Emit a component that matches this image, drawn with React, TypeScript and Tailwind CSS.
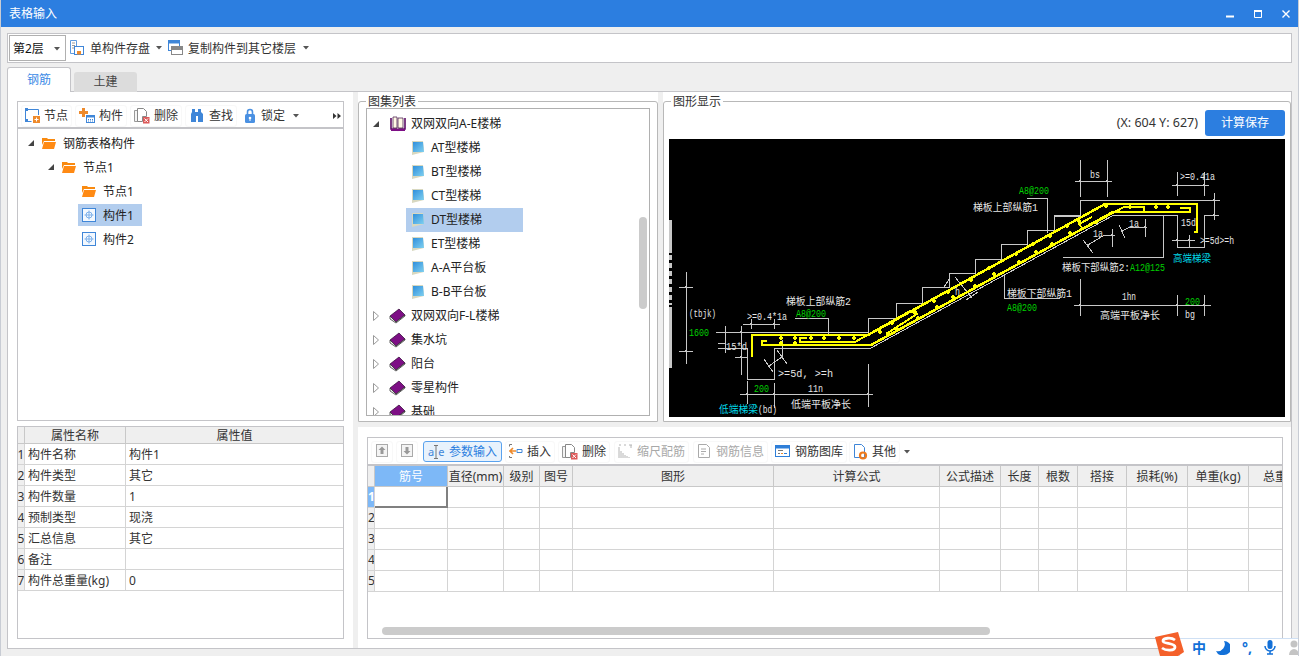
import type { ReactNode } from 'react';

const Caret = ({ className = '' }: { className?: string }) => (
  <svg width="6" height="4" viewBox="0 0 6 4" className={className}>
    <path d="M0 0h6L3 3.500z" fill="#555" />
  </svg>
);

const Folder = () => (
  <svg width="14" height="13" viewBox="0 0 14 13" className="shrink-0">
    <path d="M0 1h5l1 1h7v2H2L0 8z" fill="#f98a10" />
    <path d="M2 5h12l-2 7H0z" fill="#ff8a14" />
  </svg>
);

const ExpandedArrow = () => (
  <svg width="6" height="6" viewBox="0 0 6 6" className="shrink-0">
    <path d="M0 6h6V0z" fill="#444" />
  </svg>
);

const CollapsedArrow = () => (
  <svg width="6" height="10" viewBox="0 0 6 10" className="shrink-0">
    <path d="M.5.5l5 4.5-5 4.5z" fill="#fff" stroke="#999" />
  </svg>
);

const PartIcon = () => (
  <svg width="14" height="14" viewBox="0 0 14 14" className="shrink-0">
    <rect x=".5" y=".5" width="13" height="13" fill="#f3f8fe" stroke="#3f86d8" />
    <circle cx="7" cy="7" r="3" fill="none" stroke="#7db0ea" />
    <path d="M7 2.500v9M2.500 7h9" stroke="#7db0ea" />
  </svg>
);

const BookClosed = () => (
  <svg width="17" height="16" viewBox="0 0 17 16" className="shrink-0">
    <path d="M1 8l9-7 6 6-9 7z" fill="#7d0f85" stroke="#2c0530" strokeWidth=".7" />
    <path d="M1 8v3l6 4 9-7V7l-9 7z" fill="#eee" stroke="#222" strokeWidth=".7" />
  </svg>
);

const BookOpen = () => (
  <svg width="17" height="16" viewBox="0 0 17 16" className="shrink-0">
    <path d="M2 2v11h6l1 1 1-1h6V2" fill="none" stroke="#5d0c66" strokeWidth="1.600" />
    <path d="M4 1h4v11H4zM9 2h5v10H9z" fill="#fffbe6" stroke="#3b0840" strokeWidth=".7" />
    <path d="M2 13h14v2H2z" fill="#7d0f85" />
  </svg>
);

const Notebook = () => (
  <svg width="14" height="16" viewBox="0 0 14 16" className="shrink-0">
    <defs>
      <linearGradient id="nb" x1="0" y1="0" x2="1" y2="1">
        <stop offset="0" stopColor="#2f8fdc" />
        <stop offset="1" stopColor="#7fd0f0" />
      </linearGradient>
    </defs>
    <path d="M1 1h11l1 11-12 3z" fill="#d8d8c0" />
    <path d="M2 2h10l1 10H2z" fill="url(#nb)" />
  </svg>
);

const glyphs: Record<string, ReactNode> = {
  node: (
    <>
      <path d="M.5 10V1.500h13V7M.5 10v3.500h6" fill="none" stroke="#3f86d8" />
      <rect x="0" y="0" width="3" height="3" fill="#3f86d8" />
      <rect x="0" y="11" width="3" height="3" fill="#3f86d8" />
      <rect x="8" y="8" width="7" height="7" fill="#ee8a2c" />
      <path d="M11.500 9.500v4M9.500 11.500h4" stroke="#fff" />
    </>
  ),
  part: (
    <>
      <path d="M3 0h3v3h3v3H6v3H3V6H0V3h3z" fill="#ee8a2c" />
      <rect x="7.500" y="7.500" width="8" height="7" fill="#fff" stroke="#3f86d8" />
      <path d="M7.500 8.500h8" stroke="#3f86d8" strokeWidth="2" />
      <path d="M9 11.500h1M11 11.500h1M13 11.500h1M9 13h1M11 13h1M13 13h1" stroke="#3f86d8" />
    </>
  ),
  del: (
    <>
      <path d="M.5 2.500h6v11h-6z" fill="#f4f4f4" stroke="#999" />
      <path d="M3.500 .5h6l3 3v5h-4v5h-5z" fill="#fff" stroke="#888" />
      <rect x="9" y="9" width="6.500" height="6.500" fill="#dc5a5a" />
      <path d="M10.500 10.500l3.500 3.500M14 10.500L10.500 14" stroke="#fff" />
    </>
  ),
  find: (
    <path d="M3 1h3v3h3V1h3v3l2 2v8h-5V8H7v6H2V6l1-2z" fill="#3f86d8" />
  ),
  lock: (
    <>
      <path d="M3.500 6V4a2.500 2.500 0 015 0v2" fill="none" stroke="#4a90e2" strokeWidth="1.600" />
      <rect x="1" y="6" width="10" height="9" rx="1.500" fill="#4a90e2" />
      <circle cx="6" cy="10" r="1.300" fill="#fff" />
      <path d="M6 10v3" stroke="#fff" />
    </>
  ),
  save: (
    <>
      <path d="M.5 .5h6v13h-6z" fill="#fff" stroke="#5f9bdf" />
      <path d="M2 3h3M2 5.500h3M2 8h3" stroke="#999" />
      <rect x="4.500" y="6.500" width="9" height="8" fill="#fff" stroke="#3f86d8" />
      <rect x="7" y="11" width="4" height="3.500" fill="#ee8a2c" />
    </>
  ),
  copy: (
    <>
      <rect x=".5" y=".5" width="11" height="10" fill="#fff" stroke="#3f86d8" />
      <path d="M.5 2h11" stroke="#3f86d8" strokeWidth="3" />
      <rect x="3.500" y="6.500" width="11" height="8" fill="#fff" stroke="#888" />
      <path d="M3.500 8.500h11" stroke="#888" strokeWidth="3" />
    </>
  ),
  insert: (
    <>
      <path d="M3 .5H.5v2M.5 12v1.500H3" fill="none" stroke="#777" />
      <path d="M7 7H1.500M4 4L1 7l3 3" fill="none" stroke="#ee8a2c" strokeWidth="1.600" />
      <path d="M8 5.500h5v3H8z" fill="none" stroke="#3f86d8" />
    </>
  ),
  scale: (
    <path d="M1 3v11M3 7v7M5 9v5M7 11v3M9 12v2M11 13v1M1 1h2M6 1h2M11 1h3M13 1v3" stroke="#b4b4b4" fill="none" />
  ),
  info: (
    <>
      <path d="M1.500 .5h8l3 3v10h-11z" fill="#fff" stroke="#aaa" />
      <path d="M4 5h5M4 7.500h5M4 10h3" stroke="#aaa" />
    </>
  ),
  lib: (
    <>
      <rect x=".5" y="1.500" width="14" height="11" fill="#fff" stroke="#2f7fd8" />
      <path d="M.5 3h14" stroke="#2f7fd8" strokeWidth="3" />
      <path d="M3 6.500h5M3 9.500h2" stroke="#777" />
      <path d="M6 9.500h2" stroke="#ee8a2c" />
      <path d="M9 9.500h3" stroke="#2f7fd8" />
    </>
  ),
  other: (
    <>
      <path d="M1.500 .5h7l3 3v10h-10z" fill="#fff" stroke="#3f86d8" />
      <circle cx="10" cy="11.500" r="3" fill="none" stroke="#ee7a1c" strokeWidth="2.200" />
    </>
  ),
  up: (
    <>
      <rect x=".5" y=".5" width="11" height="12" fill="#f4f4f4" stroke="#aaa" />
      <path d="M6 2.500L2.500 6h2v4h3V6h2z" fill="#999" />
    </>
  ),
  down: (
    <>
      <rect x=".5" y=".5" width="11" height="12" fill="#f4f4f4" stroke="#aaa" />
      <path d="M6 10.500L2.500 7h2V3h3v4h2z" fill="#999" />
    </>
  ),
};

const Glyph = ({ name, w = 15 }: { name: string; w?: number }) => (
  <svg width={w} height="16" viewBox={`0 0 ${w} 16`} className="shrink-0">
    {glyphs[name]}
  </svg>
);

const Chip = ({ icon, label, w = 15, gray, className = '' }: { icon: string; label: string; w?: number; gray?: boolean; className?: string }) => (
  <div className={`flex h-[22px] items-center gap-[4px] rounded-[3px] border border-[#f8f8f8] px-[3px] ${gray ? 'text-[#a8a8a8]' : 'text-[#333]'} ${className}`}>
    <Glyph name={icon} w={w} />
    <span className="whitespace-nowrap">{label}</span>
  </div>
);

const TreeRow = ({ indent, arrow, icon, label, selected, part }: { indent: string; arrow?: ReactNode; icon: ReactNode; label: string; selected?: boolean; part?: boolean }) => (
  <div className={`flex h-[24px] items-center text-[#222] ${indent}`}>
    <div className="flex w-[14px] shrink-0 items-center">{arrow}</div>
    <div className={`flex h-[22px] items-center gap-[7px] pr-[8px] ${part ? 'pl-[4px]' : ''} ${selected ? 'bg-[#b2cdee]' : ''}`}>
      {icon}
      <span className="whitespace-nowrap pt-px">{label}</span>
    </div>
  </div>
);

const ListRow = ({ arrow, icon, label, selected, child }: { arrow?: ReactNode; icon: ReactNode; label: string; selected?: boolean; child?: boolean }) => (
  <div className={`flex h-[24px] items-center text-[#222] ${child ? 'pl-[39px]' : 'pl-[6px]'}`}>
    {!child && <div className="flex w-[16px] shrink-0 items-center">{arrow}</div>}
    <div className={`flex h-[24px] items-center ${child ? 'gap-[6px] pl-[5px]' : 'gap-[5px]'} ${selected ? 'w-[117px] bg-[#b2cdee]' : ''}`}>
      {icon}
      <span className="whitespace-nowrap">{label}</span>
    </div>
  </div>
);

const props = [
  ['构件名称', '构件1'],
  ['构件类型', '其它'],
  ['构件数量', '1'],
  ['预制类型', '现浇'],
  ['汇总信息', '其它'],
  ['备注', ''],
  ['构件总重量(kg)', '0'],
];

const gridCols = ['筋号', '直径(mm)', '级别', '图号', '图形', '计算公式', '公式描述', '长度', '根数', '搭接', '损耗(%)', '单重(kg)', '总重(kg)'];

const Line = ({ p, c = '#c8c8c8', w = 1 }: { p: string; c?: string; w?: number }) => (
  <polyline points={p} fill="none" stroke={c} strokeWidth={w} />
);

const Cad = ({ x, y, w, s, c = '#e6e6e6' }: { x: number; y: number; w: number; s: string; c?: string }) => (
  <text
    x={x}
    y={y + 4}
    textLength={w}
    lengthAdjust="spacingAndGlyphs"
    fontSize="10"
    fontFamily="'Liberation Mono','Noto Sans CJK SC',monospace"
    fill={c}
    shapeRendering="auto"
  >
    {s}
  </text>
);

const upperDots = [[892, 323], [915, 312], [934, 301], [948, 292], [971, 280], [989, 268], [1016, 254], [1033, 244], [1050, 236], [1067, 226], [1079, 221], [781, 338], [795, 338], [811, 338], [824, 338], [839, 338], [854, 338], [1106, 206], [1130, 207], [1156, 207], [1168, 207]];
const lowerDots = [[897, 330], [918, 318], [937, 307], [953, 297], [975, 286], [994, 274], [1019, 262], [1036, 252], [1052, 244], [1070, 233], [781, 343], [795, 343], [880, 332], [1096, 222]];
const ticks = [[686, 287], [686, 351], [741, 332], [741, 357], [751, 324], [774, 324], [747, 394], [774, 394], [868, 394], [1080, 181], [1107, 181], [1177, 185], [1204, 185], [1177, 240], [1189, 240], [1080, 305], [1177, 305], [1204, 305], [1214, 200], [1214, 215], [769, 366], [782, 357], [1088, 245], [1122, 231], [1112, 235], [1145, 227]];

const Drawing = () => (
  <svg viewBox="669 139 616 278" width="616" height="278" className="block bg-black" shapeRendering="crispEdges">
    {/* stair outline */}
    <Line p="716,332 868,332 868,318 896,318 896,303 922,303 922,287 949,287 949,273 975,273 975,259 1001,259 1001,244 1027,244 1027,230 1054,230 1054,216 1080,216 1080,200.500 1220,200.500" />
    <Line p="718,348 747,348 747,379 774,379 774,348 871,348 1113,215.500 1177,215.500 1177,247 1204,247 1204,215.500 1219,215.500" />
    <Line p="1054,215.500 1080,215.500" />
    <Line p="1163,215.500 1163,257.500 1063,257.500" />
    <Line p="795,318 828,318 828,334" />
    <Line p="1027,198 1047,198 1047,233" />
    <Line p="1004,275 1004,298 1060,298" />
    {/* dimension lines */}
    <Line p="686,272 686,364" />
    <Line p="679,287 693,287" />
    <Line p="679,351 693,351" />
    <Line p="743,324 780,324" />
    <Line p="751,319 751,329" />
    <Line p="774,319 774,329" />
    <Line p="725,326 725,353" />
    <Line p="741,326 741,375" />
    <Line p="735,332 747,332" />
    <Line p="718,343 725,343" />
    <Line p="735,357 747,357" />
    <Line p="740,394 873,394" />
    <Line p="747,381 747,404" />
    <Line p="774,383 774,408" />
    <Line p="868,364 868,407" />
    <Line p="764,359 773,372" />
    <Line p="777,350 787,364" />
    <Line p="769,366 782,357" />
    <Line p="782,357 782,340" />
    <Line p="955,277 972,298" />
    <Line p="944,287 950,278" />
    <Line p="966,300 978,292" />
    <Line p="1080,160 1080,197" />
    <Line p="1107,160 1107,197" />
    <Line p="1075,181 1112,181" />
    <Line p="1177,172 1177,196" />
    <Line p="1204,172 1204,196" />
    <Line p="1172,185 1209,185" />
    <Line p="1214,193 1214,220" />
    <Line p="1172,240 1195,240" />
    <Line p="1189,235 1189,247" />
    <Line p="1088,245 1103,236 1115,235" />
    <Line p="1112,229 1112,247" />
    <Line p="1083,240 1093,253" />
    <Line p="1122,231 1130,227 1147,227" />
    <Line p="1145,219 1145,237" />
    <Line p="1119,225 1125,238" />
    <Line p="1074,305 1211,305" />
    <Line p="1080,279 1080,316" />
    <Line p="1177,295 1177,316" />
    <Line p="1204,295 1204,316" />
    {ticks.map(([x, y]) => (
      <rect key={`${x}-${y}`} x={x - 1} y={y - 1} width="2" height="2" fill="#c8c8c8" />
    ))}
    {/* left edge marks */}
    <path d="M670.500 220v33M670.500 307v61" stroke="#c8c8c8" strokeWidth="3" fill="none" />
    <path d="M670.500 255v50" stroke="#c8c8c8" strokeWidth="3" strokeDasharray="5 3" fill="none" />
    {/* rebar */}
    <Line c="#ffff00" w={2.5} p="753,356 752,356 752,335 868,335 1105,204 1197,204 1197,232 1194,232" />
    <Line c="#ffff00" w={2.5} p="767,341 762,341 762,345 871,345 1113,212 1190,212 1190,208 1180,208" />
    <Line c="#ffff00" w={2} p="807,338 800,338 800,342 855,342 910,311 917,314 886,334" />
    <Line c="#ffff00" w={2} p="1144,212 1144,207 1124,207 1083,229 1079,224 1092,217" />
    {upperDots.concat(lowerDots).map(([x, y]) => (
      <path key={`d${x}-${y}`} d={`M${x - 2} ${y}h4M${x} ${y - 2}v4`} stroke="#ffff00" strokeWidth="1.500" />
    ))}
    {/* labels */}
    <Cad x={689} y={313} w={27} s="(tbjk)" />
    <Cad x={689} y={332} w={20} s="1600" c="#00d000" />
    <Cad x={747} y={316} w={40} s=">=0.4*1a" />
    <Cad x={786} y={301} w={65} s="梯板上部纵筋2" />
    <Cad x={796} y={313} w={30} s="A8@200" c="#00d000" />
    <Cad x={726} y={346} w={21} s="15*d" />
    <Cad x={778} y={373} w={55} s=">=5d, >=h" />
    <Cad x={754} y={388} w={15} s="200" c="#00d000" />
    <Cad x={808} y={388} w={15} s="11n" />
    <Cad x={719} y={409} w={39} s="低端梯梁" c="#00d8e8" />
    <Cad x={758} y={409} w={19} s="(bd)" />
    <Cad x={791} y={404} w={60} s="低端平板净长" />
    <Cad x={955} y={291} w={5} s="h" />
    <Cad x={1019} y={190} w={30} s="A8@200" c="#00d000" />
    <Cad x={973} y={207} w={65} s="梯板上部纵筋1" />
    <Cad x={1007} y={293} w={65} s="梯板下部纵筋1" />
    <Cad x={1007} y={307} w={30} s="A8@200" c="#00d000" />
    <Cad x={1090} y={174} w={10} s="bs" />
    <Cad x={1180} y={176} w={35} s=">=0.41a" />
    <Cad x={1181} y={222} w={15} s="15d" />
    <Cad x={1200} y={240} w={34} s=">=5d>=h" />
    <Cad x={1173} y={258} w={38} s="高端梯梁" c="#00d8e8" />
    <Cad x={1062} y={267} w={68} s="梯板下部纵筋2:" />
    <Cad x={1130} y={267} w={35} s="A12@125" c="#00d000" />
    <Cad x={1093} y={233} w={10} s="1a" />
    <Cad x={1129} y={223} w={10} s="1a" />
    <Cad x={1122} y={296} w={14} s="1hn" />
    <Cad x={1185} y={301} w={15} s="200" c="#00d000" />
    <Cad x={1185} y={314} w={10} s="bg" />
    <Cad x={1100} y={315} w={60} s="高端平板净长" />
  </svg>
);

const Legend = ({ text }: { text: string }) => (
  <span className="absolute left-[7px] top-[-7px] bg-white px-[2px] text-[12px] leading-[14px] text-[#333]">{text}</span>
);

export default function App() {
  return (
    <div
      className="relative flex h-[656px] w-[1299px] flex-col overflow-hidden border-x border-[#c8ccd4] bg-[#efefef] text-[12px] leading-[16px]"
      style={{ fontFamily: "'Noto Sans','Noto Sans CJK SC',sans-serif" }}
    >
      {/* title bar */}
      <div className="-mx-px flex h-[27px] shrink-0 items-center justify-between bg-[#2c7ee0] pl-[9px] pr-[9px] pt-px text-white">
        <span>表格输入</span>
        <div className="flex items-center gap-[20px]">
          <svg width="8" height="8" viewBox="0 0 8 8"><path d="M0 5.500h8v2H0z" fill="#fff" /></svg>
          <svg width="8" height="8" viewBox="0 0 8 8"><path d="M.5 1.500h7v6h-7z" fill="none" stroke="#fff" /><path d="M0 0h8v2H0z" fill="#fff" /></svg>
          <svg width="8" height="8" viewBox="0 0 8 8"><path d="M.5.500l7 7M7.500.500l-7 7" stroke="#fff" strokeWidth="1.400" /></svg>
        </div>
      </div>

      {/* top toolbar */}
      <div className="ml-[6px] mr-[6px] mt-[6px] flex h-[30px] shrink-0 items-center border border-[#c4c4c8] bg-white pl-px text-[#333]">
        <div className="flex h-[26px] w-[57px] items-center justify-between border border-[#b0b0b0] pl-[3px] pr-[5px] pt-px text-[#111]">
          <span>第2层</span>
          <Caret />
        </div>
        <div className="ml-[4px]"><Glyph name="save" /></div>
        <span className="ml-[5px] pt-px">单构件存盘</span>
        <Caret className="ml-[6px]" />
        <div className="ml-[6px]"><Glyph name="copy" /></div>
        <span className="ml-[5px] pt-px">复制构件到其它楼层</span>
        <Caret className="ml-[7px]" />
      </div>

      {/* tabs */}
      <div className="relative z-10 ml-[6px] mt-[4px] flex h-[25px] shrink-0 items-end gap-[3px]">
        <div className="flex h-[25px] w-[64px] items-center justify-center rounded-t-[3px] border border-b-0 border-[#c4c4c8] bg-white text-[#3b8ae6]">钢筋</div>
        <div className="flex h-[20px] w-[63px] items-center justify-center rounded-t-[3px] bg-[#dcdcdc] text-[#444]">土建</div>
      </div>

      {/* main frame */}
      <div className="-mt-px ml-[6px] mr-[6px] flex h-[558px] shrink-0 border border-[#c4c4c8] bg-[#efefef]">
        {/* left pane */}
        <div className="flex w-[345px] shrink-0 flex-col bg-white px-[9px] pb-[9px] pt-[9px]">
          <div className="flex h-[320px] shrink-0 flex-col border border-[#c4c4c8]">
            <div className="flex h-[27px] shrink-0 items-center gap-[3px] border-b-2 border-[#c4c4c8] pl-[3px] pt-[3px]">
              <Chip icon="node" label="节点" />
              <Chip icon="part" label="构件" w={16} />
              <Chip icon="del" label="删除" w={16} />
              <Chip icon="find" label="查找" w={16} />
              <div className="ml-px flex h-[22px] items-center gap-[5px] px-[3px] text-[#333]">
                <Glyph name="lock" w={12} />
                <span>锁定</span>
                <Caret className="ml-[3px]" />
              </div>
              <svg width="8" height="6" viewBox="0 0 8 6" className="ml-auto mr-[2px]"><path d="M0 0l3.500 3L0 6zM4.500 0L8 3 4.500 6z" fill="#333" /></svg>
            </div>
            <div className="flex-1 pt-[2px]">
              <TreeRow indent="pl-[10px]" arrow={<ExpandedArrow />} icon={<Folder />} label="钢筋表格构件" />
              <TreeRow indent="pl-[30px]" arrow={<ExpandedArrow />} icon={<Folder />} label="节点1" />
              <TreeRow indent="pl-[50px]" icon={<Folder />} label="节点1" />
              <TreeRow indent="pl-[46px]" icon={<PartIcon />} label="构件1" selected part />
              <TreeRow indent="pl-[46px]" icon={<PartIcon />} label="构件2" part />
            </div>
          </div>
          <div className="mt-[5px] flex h-[213px] shrink-0 flex-col border border-[#c4c4c8]">
            <div className="grid grid-cols-[7px_101px_1fr] text-[#333]">
              <div className="h-[17px] border-b border-r border-[#c8c8c8] bg-[#efefef]" />
              <div className="flex h-[17px] items-center justify-center border-b border-r border-[#c8c8c8] bg-[#efefef] pt-[2px]">属性名称</div>
              <div className="flex h-[17px] items-center justify-center border-b border-[#c8c8c8] bg-[#efefef] pt-[2px]">属性值</div>
              {props.map(([k, v], i) => (
                <div key={k} className="contents">
                  <div className="flex h-[21px] items-center justify-center overflow-hidden border-b border-r border-[#d4d4d4] bg-[#efefef] pt-[2px]">{i + 1}</div>
                  <div className="flex h-[21px] items-center whitespace-nowrap border-b border-r border-[#d4d4d4] pl-[3px] pt-[2px]">{k}</div>
                  <div className="flex h-[21px] items-center border-b border-[#d4d4d4] pl-[3px] pt-[2px]">{v}</div>
                </div>
              ))}
            </div>
          </div>
        </div>

        {/* right pane */}
        <div className="ml-[5px] flex min-w-0 flex-1 flex-col">
          <div className="flex h-[330px] shrink-0 gap-[5px]">
            <div className="w-[300px] shrink-0 bg-white pt-[9px]">
              <div className="relative h-[321px] rounded-t-[3px] border border-[#b8b8b8] px-[7px] pt-[6px]">
                <Legend text="图集列表" />
                <div className="relative h-[308px] overflow-hidden border border-[#b0b0b0] pt-[3px]">
                  <ListRow arrow={<ExpandedArrow />} icon={<BookOpen />} label="双网双向A-E楼梯" />
                  <ListRow child icon={<Notebook />} label="AT型楼梯" />
                  <ListRow child icon={<Notebook />} label="BT型楼梯" />
                  <ListRow child icon={<Notebook />} label="CT型楼梯" />
                  <ListRow child selected icon={<Notebook />} label="DT型楼梯" />
                  <ListRow child icon={<Notebook />} label="ET型楼梯" />
                  <ListRow child icon={<Notebook />} label="A-A平台板" />
                  <ListRow child icon={<Notebook />} label="B-B平台板" />
                  <ListRow arrow={<CollapsedArrow />} icon={<BookClosed />} label="双网双向F-L楼梯" />
                  <ListRow arrow={<CollapsedArrow />} icon={<BookClosed />} label="集水坑" />
                  <ListRow arrow={<CollapsedArrow />} icon={<BookClosed />} label="阳台" />
                  <ListRow arrow={<CollapsedArrow />} icon={<BookClosed />} label="零星构件" />
                  <ListRow arrow={<CollapsedArrow />} icon={<BookClosed />} label="基础" />
                  <div className="absolute left-[272px] top-[108px] h-[92px] w-[8px] rounded-[4px] bg-[#cbcbcb]" />
                </div>
              </div>
            </div>
            <div className="min-w-0 flex-1 bg-white pt-[9px]">
              <div className="relative h-[321px] rounded-t-[3px] border border-[#b8b8b8] pl-[5px] pr-[5px]">
                <Legend text="图形显示" />
                <div className="flex h-[37px] items-center justify-end gap-[7px] pb-[1px] pt-[5px] text-[#333]">
                  <span className="text-[12.500px]">(X: 604 Y: 627)</span>
                  <button className="h-[26px] w-[80px] rounded-[3px] bg-[#2c7ee0] text-white">计算保存</button>
                </div>
                <Drawing />
              </div>
            </div>
          </div>
          <div className="mt-[5px] min-h-0 flex-1 bg-white pl-[9px] pt-[10px]">
            <div className="relative h-[202px] w-[916px] overflow-hidden border border-[#c4c4c8]">
              <div className="flex h-[28px] items-center gap-[3px] border-b-2 border-[#c4c4c8] pl-[3px] pt-px">
                <div className="flex h-[22px] w-[22px] items-center justify-center rounded-[3px] border border-[#f8f8f8]"><Glyph name="up" w={12} /></div>
                <div className="flex h-[22px] w-[22px] items-center justify-center rounded-[3px] border border-[#f8f8f8]"><Glyph name="down" w={12} /></div>
                <div className="ml-[2px] flex h-[21px] w-[79px] items-center gap-[5px] rounded-[3px] border border-[#5aa2ee] bg-[#e8f2fc] pl-[4px] text-[#2b7fe0]">
                  <span className="flex w-[16px] shrink-0 items-center text-[11px] text-[#3f86d8]">
                    a
                    <svg width="4" height="14" viewBox="0 0 4 14" className="shrink-0"><path d="M0 .5h4M2 .5v13M0 13.500h4" stroke="#777" fill="none" /></svg>
                    e
                  </span>
                  <span className="whitespace-nowrap">参数输入</span>
                </div>
                <Chip icon="insert" label="插入" w={14} />
                <Chip icon="del" label="删除" w={16} />
                <Chip icon="scale" label="缩尺配筋" gray className="ml-px" />
                <Chip icon="info" label="钢筋信息" gray className="ml-px" />
                <Chip icon="lib" label="钢筋图库" w={16} />
                <Chip icon="other" label="其他" className="-ml-px" />
                <Caret className="ml-px" />
              </div>
              <div className="grid grid-cols-[7px_73px_56px_36px_33px_201px_166px_61px_38px_39px_49px_61px_61px_74px] text-[#333]">
                <div className="h-[21px] border-b border-r border-[#c8c8c8] bg-[#efefef]" />
                {gridCols.map((c, i) => (
                  <div
                    key={c}
                    className={`flex h-[21px] items-center justify-center whitespace-nowrap border-b border-r border-[#c8c8c8] pt-px ${i === 0 ? 'bg-[#7db8f7] text-white' : 'bg-[#efefef]'}`}
                  >
                    {c}
                  </div>
                ))}
                {[1, 2, 3, 4, 5].map((r) => (
                  <div key={r} className="contents">
                    <div className={`flex h-[21px] items-center overflow-hidden border-b border-r border-[#d4d4d4] ${r === 1 ? 'bg-[#7db8f7] font-bold text-white' : 'bg-[#efefef]'}`}>{r}</div>
                    {gridCols.map((c, i) => (
                      <div
                        key={c}
                        className={`h-[21px] ${r === 1 && i === 0 ? 'border-b-2 border-r-2 border-[#808080]' : 'border-b border-r border-[#d4d4d4]'}`}
                      />
                    ))}
                  </div>
                ))}
              </div>
              <div className="absolute bottom-[3px] left-[14px] h-[8px] w-[608px] rounded-[4px] bg-[#cbcbcb]" />
            </div>
          </div>
        </div>
      </div>

      <div className="-mx-px mt-[7px] h-px shrink-0 bg-[#c8ccd4]" />

      {/* input method bar */}
      <div className="absolute bottom-0 right-0 flex h-[18px] w-[119px] items-center border-l border-t border-[#cfe0f4] bg-white pl-[12px]">
        <span className="text-[14px] font-bold leading-none text-[#1270d8]">中</span>
        <svg width="14" height="14" viewBox="0 0 14 14" className="ml-[10px] shrink-0"><path d="M8 0a7 7 0 01-8 10 7 7 0 008 4 7 7 0 000-14z" fill="#1270d8" /></svg>
        <span className="ml-[12px] text-[14px] font-bold leading-none text-[#1270d8]">°,</span>
        <svg width="12" height="15" viewBox="0 0 12 15" className="ml-[12px] shrink-0"><rect x="3.500" y="0" width="5" height="9" rx="2.500" fill="#1270d8" /><path d="M1 6a5 5 0 0010 0M6 11v3M3 14h6" fill="none" stroke="#1270d8" strokeWidth="1.500" /></svg>
        <svg width="10" height="15" viewBox="0 0 10 15" className="ml-[13px] shrink-0"><circle cx="5" cy="4" r="3.500" fill="#c4c4c4" /><path d="M0 15a5 6 0 0110 0z" fill="#c4c4c4" /></svg>
      </div>
      <svg width="32" height="24" viewBox="0 0 32 24" className="absolute bottom-0 right-[113px]">
        <path d="M2 5L25 0l6 20-6 4H7z" fill="#f4602a" />
        <path d="M22 8c-4-3-12-2-12 1s12 2 12 6-9 4-13 1" fill="none" stroke="#fff" strokeWidth="2.800" />
      </svg>
    </div>
  );
}
